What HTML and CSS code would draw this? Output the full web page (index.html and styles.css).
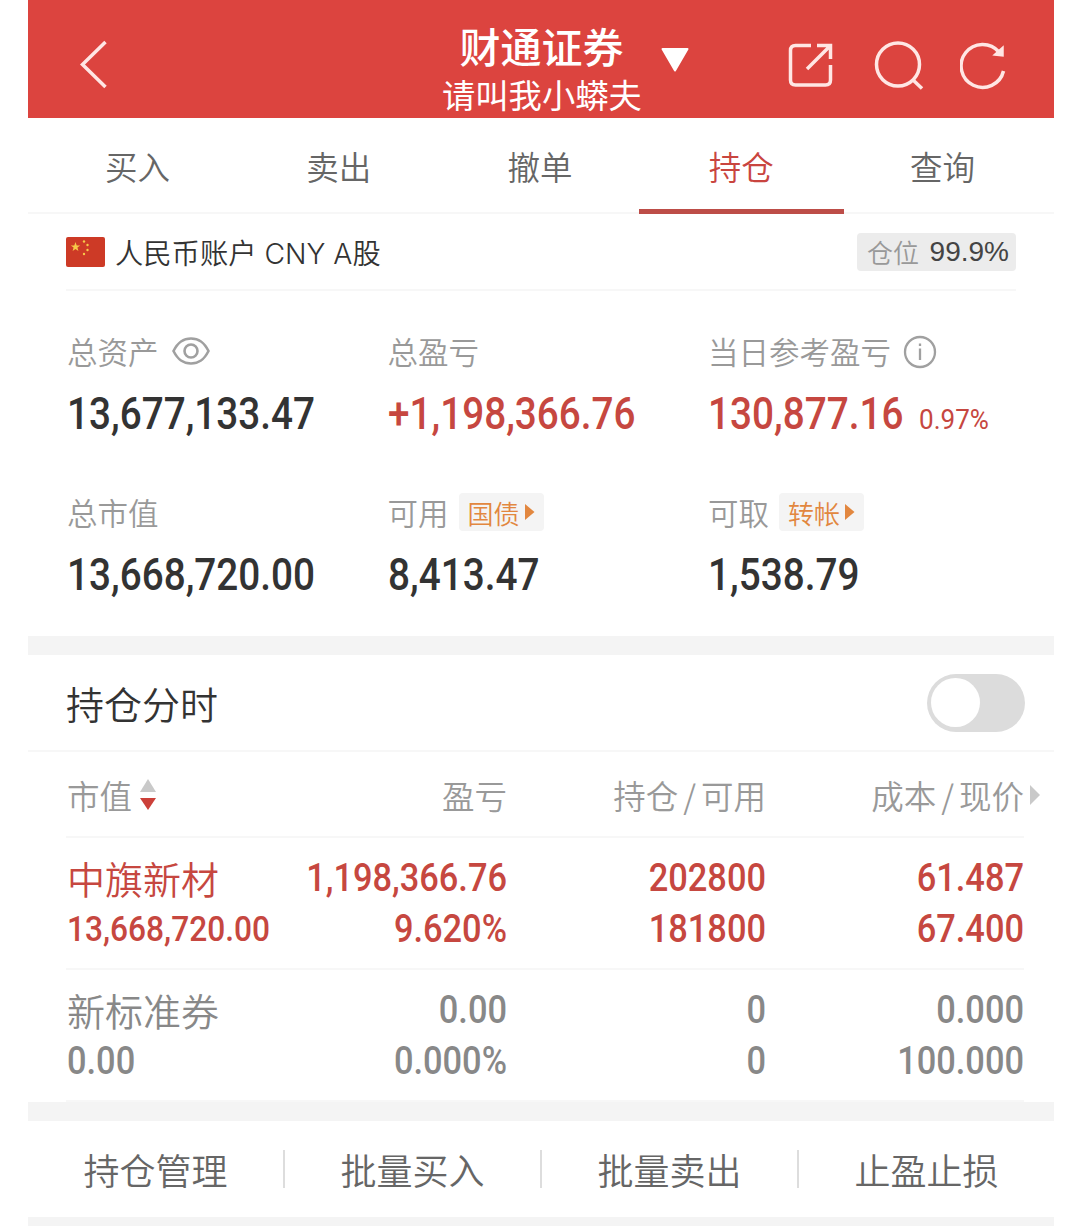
FILE: index.html
```html
<!DOCTYPE html>
<html lang="zh-CN">
<head>
    <meta charset="UTF-8">
    <meta name="viewport" content="width=device-width, initial-scale=1.0">
    <title>持仓</title>
    <link rel="stylesheet" href="styles.css">
</head>
<body>
    <div class="app">
        <header class="header">
            <svg class="back" width="30" height="52" viewBox="0 0 30 52"><path d="M27.500 3L4.500 25.500L27.500 48"/></svg>
            <div class="title">
                <h1>财通证券</h1>
                <p>请叫我小蟒夫</p>
            </div>
            <svg class="caret" width="30" height="25" viewBox="0 0 30 25"><path d="M2.500 2H27.500L15 23.500Z"/></svg>
            <div class="actions">
                <svg width="46" height="48" viewBox="0 0 46 48"><path d="M23 4.500H7.500Q2.500 4.500 2.500 9.500V39Q2.500 44 7.500 44H37.500Q42.500 44 42.500 39V24"/><path d="M29 4.500H42.500V18M42 5L19 28"/></svg>
                <svg width="50" height="50" viewBox="0 0 50 50"><circle cx="24" cy="23.500" r="21.500"/><path d="M38.500 38.500L48 47.500"/></svg>
                <svg width="48" height="50" viewBox="0 0 48 50"><path d="M43.500 30A21.500 21.500 0 1 1 39 11"/><path class="tip" d="M43 6V15L34 14Z"/></svg>
            </div>
        </header>

        <nav class="tabs">
            <a class="tab">买入</a>
            <a class="tab">卖出</a>
            <a class="tab">撤单</a>
            <a class="tab active">持仓</a>
            <a class="tab">查询</a>
        </nav>

        <section class="summary">
            <div class="account">
                <svg class="flag" width="39" height="30" viewBox="0 0 39 30">
                    <rect width="39" height="30" rx="2" fill="#cd3a26"/>
                    <g fill="#f7c948">
                        <path d="M9.500 5L10.700 8.400H14.200L11.400 10.500L12.400 14L9.500 11.900L6.600 14L7.600 10.500L4.800 8.400H8.300Z"/>
                        <circle cx="18" cy="4.500" r="1.200"/>
                        <circle cx="21.500" cy="8" r="1.200"/>
                        <circle cx="21.500" cy="13" r="1.200"/>
                        <circle cx="18" cy="17" r="1.200"/>
                    </g>
                </svg>
                <span class="account-name">人民币账户 CNY A股</span>
                <span class="position">仓位 <b>99.9%</b></span>
            </div>
            <div class="stats">
                <div class="stat">
                    <div class="label">总资产
                        <svg class="eye" width="40" height="30" viewBox="0 0 40 30"><path d="M2.500 15C7 6 12 2.500 20 2.500S33 6 37.500 15C33 24 28 27.500 20 27.500S7 24 2.500 15Z"/><circle cx="20" cy="15" r="6.500"/></svg>
                    </div>
                    <div class="value"><span class="num">13,677,133.47</span></div>
                </div>
                <div class="stat">
                    <div class="label">总盈亏</div>
                    <div class="value red"><span class="num">+1,198,366.76</span></div>
                </div>
                <div class="stat">
                    <div class="label">当日参考盈亏
                        <svg class="info" width="34" height="34" viewBox="0 0 34 34"><circle cx="17" cy="17" r="15"/><path d="M17 13.500V25M17 8.500V11"/></svg>
                    </div>
                    <div class="value red"><span class="num">130,877.16</span><span class="rate">0.97%</span></div>
                </div>
                <div class="stat">
                    <div class="label">总市值</div>
                    <div class="value"><span class="num">13,668,720.00</span></div>
                </div>
                <div class="stat">
                    <div class="label">可用 <span class="tag">国债<svg width="11" height="18" viewBox="0 0 11 18"><path d="M1 1L10.500 9L1 17Z"/></svg></span></div>
                    <div class="value"><span class="num">8,413.47</span></div>
                </div>
                <div class="stat">
                    <div class="label">可取 <span class="tag">转帐<svg width="11" height="18" viewBox="0 0 11 18"><path d="M1 1L10.500 9L1 17Z"/></svg></span></div>
                    <div class="value"><span class="num">1,538.79</span></div>
                </div>
            </div>
        </section>

        <div class="band"></div>

        <div class="chart-row">
            <span>持仓分时</span>
            <span class="toggle"></span>
        </div>

        <section class="holdings">
            <div class="row head">
                <div class="sort">市值
                    <svg width="16" height="32" viewBox="0 0 16 32"><path d="M8 0L16 13H0Z" fill="#c9c9c9"/><path d="M0 19H16L8 31Z" fill="#cc4039"/></svg>
                </div>
                <div>盈亏</div>
                <div>持仓<i>/</i>可用</div>
                <div class="more">成本<i>/</i>现价<svg width="10" height="20" viewBox="0 0 10 20"><path d="M0 0L10 10L0 20Z" fill="#c9c9c9"/></svg></div>
            </div>
            <div class="row red">
                <div><p class="name">中旗新材</p><p class="num small">13,668,720.00</p></div>
                <div><p class="num">1,198,366.76</p><p class="num">9.620%</p></div>
                <div><p class="num">202800</p><p class="num">181800</p></div>
                <div><p class="num">61.487</p><p class="num">67.400</p></div>
            </div>
            <div class="row gray">
                <div><p class="name">新标准券</p><p class="num">0.00</p></div>
                <div><p class="num">0.00</p><p class="num">0.000%</p></div>
                <div><p class="num">0</p><p class="num">0</p></div>
                <div><p class="num">0.000</p><p class="num">100.000</p></div>
            </div>
        </section>

        <div class="band"></div>

        <nav class="bottom">
            <a>持仓管理</a>
            <a>批量买入</a>
            <a>批量卖出</a>
            <a>止盈止损</a>
        </nav>
        <div class="band"></div>
    </div>
</body>
</html>
```
FILE: styles.css
```css
* {
    box-sizing: border-box;
}
body {
    margin: 0;
    background-color: #fff;
    color: #333;
    font-family: "Noto Sans CJK SC", sans-serif;
    font-weight: 350;
}
h1, p {
    margin: 0;
}
.app {
    width: 1026px;
    height: 1226px;
    margin-left: 28px;
    overflow: hidden;
}
svg {
    display: block;
    flex: none;
}

/* header */
.header {
    display: grid;
    grid-template-columns: 414px 199px 148px 1fr;
    height: 118px;
    background-color: #dc443f;
    color: #fff;
}
.header svg {
    fill: none;
    stroke: #ffe6e4;
    stroke-width: 3.500;
}
.header .back {
    margin: 39px 0 0 50px;
}
.title {
    text-align: center;
    white-space: nowrap;
    padding-top: 20px;
}
.title h1 {
    font-size: 41px;
    font-weight: 500;
    line-height: 51px;
}
.title p {
    font-size: 33.300px;
    font-weight: 400;
    line-height: 46px;
}
.header .caret {
    margin: 47px 0 0 19px;
    fill: #fff;
    stroke: #fff;
    stroke-linejoin: round;
    stroke-width: 2;
}
.actions {
    display: flex;
    gap: 38px;
    padding-top: 41px;
}
.actions svg:first-child {
    margin-right: 2px;
    margin-left: -1px;
}
.actions svg:last-child {
    margin-left: -2px;
}
.header .tip {
    fill: #ffe6e4;
    stroke-width: 1.500;
}

/* tabs */
.tabs {
    display: flex;
    height: 96px;
    padding: 0 11px 0 9px;
    border-bottom: 2px solid #f7f7f7;
}
.tab {
    flex: 1;
    position: relative;
    text-align: center;
    font-size: 32.500px;
    line-height: 96px;
    color: #666;
}
.tab.active {
    color: #c9453f;
}
.tab.active::after {
    content: "";
    position: absolute;
    left: -2px;
    right: -2px;
    bottom: -2px;
    height: 5px;
    background-color: #bd4d48;
}

/* account summary */
.summary {
    height: 422px;
    padding: 0 38px;
}
.account {
    display: flex;
    align-items: center;
    height: 77px;
    border-bottom: 2px solid #f7f7f7;
}
.account-name {
    margin-left: 10px;
    font-family: Inter, "Noto Sans CJK SC", sans-serif;
    font-size: 28.300px;
}
.position {
    display: flex;
    align-items: center;
    justify-content: space-between;
    width: 159px;
    height: 38px;
    margin-left: auto;
    padding: 0 7px 0 10px;
    border-radius: 4px;
    background-color: #ececec;
    color: #999;
    font-size: 26px;
}
.position b {
    color: #444;
    font-family: "Liberation Sans", sans-serif;
    font-size: 28px;
    font-weight: 400;
}
.stats {
    display: grid;
    grid-template-columns: 320.500px 320.500px 1fr;
    grid-auto-rows: 161px;
    padding-top: 35px;
}
.stat {
    padding-left: 1px;
    white-space: nowrap;
}
.label {
    display: flex;
    align-items: center;
    height: 50px;
    color: #999;
    font-size: 30.500px;
}
.label > svg {
    fill: none;
    stroke: #a0a0a0;
    stroke-width: 2.600;
}
.eye {
    margin-left: 12px;
}
.info {
    margin-top: 1px;
    margin-left: 12px;
}
.label .info {
    stroke-width: 2.300;
}
.tag {
    display: flex;
    align-items: center;
    gap: 4px;
    height: 38px;
    margin-left: 10px;
    padding: 0 9px;
    border-radius: 4px;
    background-color: #f4f4f4;
    color: #e2873f;
    font-size: 26px;
}
.tag svg {
    fill: #e2873f;
}
.num {
    display: block;
    font-family: Roboto, sans-serif;
    font-weight: 500;
    transform: scaleX(.89);
    transform-origin: left;
}
.value {
    display: flex;
    align-items: baseline;
    height: 72px;
    font-size: 43.500px;
    line-height: 78px;
}
.red {
    color: #c64740;
}
.rate {
    margin-left: -9px;
    font-family: Roboto, sans-serif;
    font-size: 28px;
    font-weight: 450;
    transform: scaleX(.93);
    transform-origin: left;
}

.band {
    height: 19px;
    background-color: #f4f4f4;
}

/* intraday switch */
.chart-row {
    display: flex;
    align-items: center;
    justify-content: space-between;
    height: 97px;
    padding: 1px 29px 0 38px;
    border-bottom: 2px solid #f7f7f7;
    font-size: 38px;
    line-height: 54px;
}
.toggle {
    width: 98px;
    height: 58px;
    padding: 4px;
    border-radius: 29px;
    background-color: #dcdcdc;
}
.toggle::before {
    content: "";
    display: block;
    width: 49px;
    height: 49px;
    border-radius: 50%;
    background-color: #fff;
}

/* holdings table */
.holdings {
    height: 350px;
    padding: 0 30px 0 38px;
}
.row {
    display: grid;
    grid-template-columns: 210px 231px 259px 258px;
    height: 132px;
    padding-top: 15px;
    border-bottom: 2px solid #f7f7f7;
    text-align: right;
    white-space: nowrap;
}
.row div:first-child {
    padding-left: 1px;
    text-align: left;
}
.row p {
    height: 51px;
    font-size: 38px;
    line-height: 51px;
}
.row .name {
    line-height: 49px;
}
.row .num {
    transform: scaleX(.905);
    transform-origin: right;
}
.row div:first-child .num {
    transform-origin: left;
}
.row .num.small {
    font-size: 35px;
}
.row.head {
    height: 86px;
    padding: 0;
    color: #999;
    font-size: 32.500px;
    line-height: 86px;
}
.head i {
    padding: 0 5px;
    font-style: normal;
}
.sort {
    display: flex;
    align-items: center;
    gap: 8px;
}
.more {
    display: flex;
    align-items: center;
    justify-content: flex-end;
    margin-right: -16px;
}
.more svg {
    margin-left: 6px;
}
.gray {
    color: #888;
}

/* bottom actions */
.bottom {
    display: flex;
    align-items: center;
    height: 96px;
}
.bottom a {
    flex: 1;
    height: 38px;
    border-right: 2px solid #ddd;
    text-align: center;
    color: #666;
    font-size: 36px;
    line-height: 38px;
}
.bottom a:last-child {
    border-right: none;
}
```
